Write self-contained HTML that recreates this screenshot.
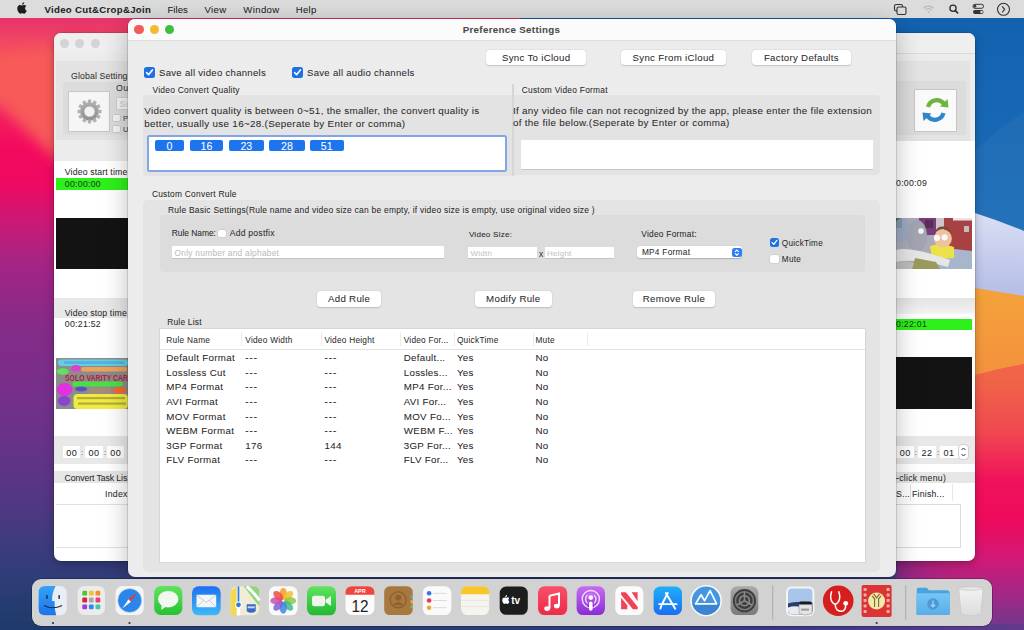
<!DOCTYPE html>
<html><head><meta charset="utf-8">
<style>
*{box-sizing:border-box;margin:0;padding:0}
html,body{width:1024px;height:630px;overflow:hidden;background:#2a2f6a;font-family:"Liberation Sans",sans-serif;color:#2b2b2b;position:relative}
.a{position:absolute}
.t{position:absolute;white-space:nowrap;line-height:1;-webkit-text-stroke:0.05px currentColor}
</style></head><body>

<svg class="a" style="left:0;top:0" width="1024" height="630" viewBox="0 0 1024 630">
<defs>
<linearGradient id="wlg" x1="0" y1="0" x2="0" y2="630" gradientUnits="userSpaceOnUse">
<stop offset="0.0286" stop-color="#e8336a"/>
<stop offset="0.0635" stop-color="#ef4466"/>
<stop offset="0.2381" stop-color="#f30a5e"/>
<stop offset="0.2937" stop-color="#ee0a62"/>
<stop offset="0.3571" stop-color="#c81a78"/>
<stop offset="0.4159" stop-color="#a52484"/>
<stop offset="0.5079" stop-color="#882a88"/>
<stop offset="0.6349" stop-color="#74308a"/>
<stop offset="0.7619" stop-color="#5a3585"/>
<stop offset="0.8413" stop-color="#443a80"/>
<stop offset="0.9206" stop-color="#2e3d78"/>
<stop offset="1.0000" stop-color="#1d3b6a"/>
</linearGradient>
<linearGradient id="wrg" x1="0" y1="0" x2="0" y2="630" gradientUnits="userSpaceOnUse">
<stop offset="0.4603" stop-color="#f06448"/>
<stop offset="0.6032" stop-color="#f06448"/>
<stop offset="0.6825" stop-color="#f04a50"/>
<stop offset="0.7619" stop-color="#f0125c"/>
<stop offset="0.8254" stop-color="#ee0a5c"/>
<stop offset="0.8889" stop-color="#d01a78"/>
<stop offset="0.9524" stop-color="#9a2a88"/>
<stop offset="1.0000" stop-color="#6c3a8c"/>
</linearGradient>
<linearGradient id="wor" x1="0" y1="280" x2="0" y2="380" gradientUnits="userSpaceOnUse"><stop offset="0" stop-color="#f4a43a"/><stop offset="1" stop-color="#f4903e"/></linearGradient>
<linearGradient id="wlt" x1="0" y1="205" x2="0" y2="300" gradientUnits="userSpaceOnUse"><stop offset="0" stop-color="#dfe3f6"/><stop offset="0.6" stop-color="#c3caec"/><stop offset="1" stop-color="#b3bce6"/></linearGradient>
<linearGradient id="wbl" x1="0" y1="18" x2="0" y2="230" gradientUnits="userSpaceOnUse"><stop offset="0" stop-color="#1262b0"/><stop offset="1" stop-color="#1c6db8"/></linearGradient>
<linearGradient id="wbg" x1="0" y1="0" x2="1024" y2="0" gradientUnits="userSpaceOnUse">
<stop offset="0" stop-color="#1e3a6c"/>
<stop offset="0.5" stop-color="#2a3c78"/>
<stop offset="0.78" stop-color="#3a3a82"/>
<stop offset="0.88" stop-color="#4a3a88"/>
<stop offset="1" stop-color="#643a8c"/>
</linearGradient>
<linearGradient id="wbg2" x1="520" y1="0" x2="1024" y2="0" gradientUnits="userSpaceOnUse"><stop offset="0" stop-color="#2a3c78"/><stop offset="0.74" stop-color="#383a80"/><stop offset="0.755" stop-color="#7a2a84" stop-opacity="0.75"/><stop offset="0.93" stop-color="#c81e78" stop-opacity="0"/></linearGradient>
<filter id="blur8" x="-50%" y="-50%" width="200%" height="200%"><feGaussianBlur stdDeviation="7"/></filter>
</defs>
<rect x="0" y="0" width="520" height="630" fill="url(#wlg)"/>
<polygon points="-30,50 150,38 150,196 54,157 0,106 -30,92" fill="#f75a58" filter="url(#blur8)"/>
<rect x="520" y="0" width="504" height="630" fill="url(#wrg)"/>
<path d="M520 200 H1024 V364 Q1000 368 975 375 L520 420Z" fill="url(#wor)"/>
<polygon points="520,0 1024,0 1024,296 975,288 520,220" fill="url(#wlt)"/>
<path d="M520 0 H1024 V231 Q1000 221 975 213 L520 45Z" fill="url(#wbl)"/>
<path d="M520 400 L975 150 Q1000 128 1024 112 V231 Q1000 221 975 213 L520 45Z" fill="#ffffff" opacity="0.04"/>
<rect x="520" y="540" width="504" height="90" fill="url(#wbg2)"/>
<rect x="0" y="624" width="1024" height="6" fill="url(#wbg)"/>
</svg>
<div class="a" style="left:0px;top:0px;width:1024.00px;height:18.00px;background:#dcdcdd"></div>
<svg class="a" style="left:16.8px;top:2px" width="10" height="11.8" viewBox="0 0 11 13"><path d="M8.9 6.9c0-1.6 1.3-2.3 1.4-2.4-.8-1.1-1.9-1.3-2.3-1.3-1-.1-1.9.6-2.4.6-.5 0-1.3-.6-2.1-.6C2.4 3.2 1.4 3.8.9 4.8c-1.2 2-.3 5 .8 6.6.6.8 1.2 1.6 2 1.6.8 0 1.1-.5 2.1-.5s1.2.5 2.1.5c.9 0 1.4-.8 1.9-1.6.6-.9.9-1.8.9-1.8s-1.8-.7-1.8-2.7zM7.3 2.2c.4-.5.7-1.3.7-2-.6 0-1.4.4-1.8.9-.4.5-.7 1.2-.6 1.9.7.1 1.3-.3 1.7-.8z" fill="#1d1d1d"/></svg>
<div class="t" style="left:44.40px;top:5.00px;font-size:9.59px;letter-spacing:0.336px;color:#1e1e1e;font-weight:bold;">Video Cut&amp;Crop&amp;Join</div>
<div class="t" style="left:167.40px;top:5.00px;font-size:9.59px;letter-spacing:0.053px;color:#222;font-weight:normal;">Files</div>
<div class="t" style="left:204.50px;top:5.00px;font-size:9.59px;letter-spacing:0.352px;color:#222;font-weight:normal;">View</div>
<div class="t" style="left:243.30px;top:5.00px;font-size:9.59px;letter-spacing:0.370px;color:#222;font-weight:normal;">Window</div>
<div class="t" style="left:295.80px;top:5.00px;font-size:9.59px;letter-spacing:0.274px;color:#222;font-weight:normal;">Help</div>
<svg class="a" style="left:890px;top:0px" width="134" height="18" viewBox="0 0 134 18">
<rect x="4.5" y="4.5" width="8" height="6.5" rx="1.5" fill="none" stroke="#333" stroke-width="1.1"/>
<rect x="7" y="7" width="9" height="7.5" rx="1.5" fill="#dcdcdd" stroke="#333" stroke-width="1.1"/>
<path d="M33.5 8.2 a7 7 0 0 1 10 0 M35.3 10 a4.5 4.5 0 0 1 6.4 0" fill="none" stroke="#b9b9b9" stroke-width="1.3"/>
<circle cx="38.5" cy="12" r="1" fill="#b9b9b9"/>
<circle cx="63" cy="8.3" r="3.1" fill="none" stroke="#2a2a2a" stroke-width="1.3"/>
<path d="M65.3 10.6 L67.6 12.9" stroke="#2a2a2a" stroke-width="1.5" stroke-linecap="round"/>
<rect x="83" y="4.3" width="10.5" height="4" rx="2" fill="none" stroke="#333" stroke-width="1"/>
<circle cx="85" cy="6.3" r="1.3" fill="#333"/>
<rect x="83" y="10" width="10.5" height="4" rx="2" fill="#333"/>
<circle cx="91.5" cy="12" r="1.3" fill="#dcdcdd"/>
<circle cx="113.5" cy="9.3" r="6" fill="none" stroke="#333" stroke-width="1.1"/>
<path d="M112.2 6.3 L114.6 9.3 L112.2 12.3" fill="none" stroke="#333" stroke-width="1.1"/>
</svg>
<div class="a" style="left:54px;top:33px;width:100px;height:528px;border-radius:7px;overflow:hidden;background:#fff;box-shadow:0 0 0 0.5px rgba(0,0,0,0.2),0 3px 10px rgba(0,0,0,0.25)">
<div class="a" style="left:0;top:0;width:100px;height:21px;background:#efefef;border-bottom:1px solid #dadada"></div>
<div class="a" style="left:6.0px;top:6px;width:9px;height:9px;border-radius:50%;background:#d4d4d4"></div>
<div class="a" style="left:21.0px;top:6px;width:9px;height:9px;border-radius:50%;background:#d4d4d4"></div>
<div class="a" style="left:36.5px;top:6px;width:9px;height:9px;border-radius:50%;background:#d4d4d4"></div>
<div class="a" style="left:0;top:20px;width:100px;height:108px;background:#ececec"></div>
<div class="a" style="left:2px;top:28px;width:98px;height:79px;background:#e3e3e3"></div>
<div class="a" style="left:9px;top:49px;width:91px;height:53px;background:#dcdcdc;border-radius:3px"></div>
</div>
<div class="t" style="left:71.00px;top:72.00px;font-size:8.74px;letter-spacing:0.123px;color:#333;font-weight:normal;">Global Setting</div>
<div class="t" style="left:116.00px;top:84.00px;font-size:8.74px;letter-spacing:0.375px;color:#333;font-weight:normal;">Ou</div>
<div class="a" style="left:68.5px;top:91.5px;width:40.50px;height:39.00px;background:#f6f6f6;box-shadow:0 0 0 0.5px rgba(0,0,0,0.2)"></div>
<svg class="a" style="left:76.5px;top:98.5px" width="25" height="25" viewBox="-12.5 -12.5 25 25">
<defs><linearGradient id="ggear" x1="0" y1="-12" x2="0" y2="12" gradientUnits="userSpaceOnUse"><stop offset="0" stop-color="#b4b4b4"/><stop offset="1" stop-color="#858585"/></linearGradient></defs>
<g fill="url(#ggear)">
<circle r="9.3"/>
<rect x="-1.7" y="-12" width="3.4" height="4" rx="0.6" transform="rotate(0)"/><rect x="-1.7" y="-12" width="3.4" height="4" rx="0.6" transform="rotate(30)"/><rect x="-1.7" y="-12" width="3.4" height="4" rx="0.6" transform="rotate(60)"/><rect x="-1.7" y="-12" width="3.4" height="4" rx="0.6" transform="rotate(90)"/><rect x="-1.7" y="-12" width="3.4" height="4" rx="0.6" transform="rotate(120)"/><rect x="-1.7" y="-12" width="3.4" height="4" rx="0.6" transform="rotate(150)"/><rect x="-1.7" y="-12" width="3.4" height="4" rx="0.6" transform="rotate(180)"/><rect x="-1.7" y="-12" width="3.4" height="4" rx="0.6" transform="rotate(210)"/><rect x="-1.7" y="-12" width="3.4" height="4" rx="0.6" transform="rotate(240)"/><rect x="-1.7" y="-12" width="3.4" height="4" rx="0.6" transform="rotate(270)"/><rect x="-1.7" y="-12" width="3.4" height="4" rx="0.6" transform="rotate(300)"/><rect x="-1.7" y="-12" width="3.4" height="4" rx="0.6" transform="rotate(330)"/>
</g><circle r="5.6" fill="#f2f2f2"/><circle r="5.6" fill="none" stroke="#9a9a9a" stroke-width="0.8"/>
</svg>
<div class="a" style="left:117px;top:97.5px;width:11.00px;height:11.00px;background:#f4f4f4;box-shadow:0 0 0 0.5px rgba(0,0,0,0.1)"></div>
<div class="t" style="left:119.50px;top:100.00px;font-size:8.46px;letter-spacing:0.336px;color:#c8c8c8;font-weight:normal;">Su</div>
<div class="a" style="left:113.4px;top:115px;width:6.60px;height:6.40px;background:#f4f4f4;box-shadow:0 0 0 0.5px rgba(0,0,0,0.15);border-radius:1px"></div>
<div class="a" style="left:113.4px;top:126px;width:6.60px;height:6.40px;background:#f4f4f4;box-shadow:0 0 0 0.5px rgba(0,0,0,0.15);border-radius:1px"></div>
<div class="t" style="left:123.00px;top:115.00px;font-size:7.52px;letter-spacing:0.328px;color:#444;font-weight:normal;">P</div>
<div class="t" style="left:123.00px;top:126.00px;font-size:7.52px;letter-spacing:0.344px;color:#444;font-weight:normal;">U</div>
<div class="t" style="left:64.80px;top:168.00px;font-size:8.74px;letter-spacing:0.129px;color:#2a2a2a;font-weight:normal;">Video start time</div>
<div class="a" style="left:56px;top:178px;width:72.00px;height:12.00px;background:#2ef01b"></div>
<div class="t" style="left:64.80px;top:180.00px;font-size:8.74px;letter-spacing:0.275px;color:#1b3b1b;font-weight:normal;">00:00:00</div>
<div class="a" style="left:56px;top:217.5px;width:72.00px;height:51.50px;background:#131313"></div>
<div class="a" style="left:54px;top:298px;width:74.00px;height:20.00px;background:#e8e8e8"></div>
<div class="t" style="left:64.80px;top:309.00px;font-size:8.74px;letter-spacing:0.137px;color:#2a2a2a;font-weight:normal;">Video stop time</div>
<div class="t" style="left:64.80px;top:320.00px;font-size:8.74px;letter-spacing:0.275px;color:#2a2a2a;font-weight:normal;">00:21:52</div>
<svg class="a" style="left:56px;top:357.5px" width="72" height="51" viewBox="0 0 72 51">
<rect width="72" height="51" fill="#8c8c8c"/>
<rect x="2" y="1.5" width="70" height="6.5" rx="3" fill="#62cfe6"/>
<rect x="8" y="3.3" width="60" height="2.6" fill="#3a78c8" opacity="0.35"/>
<rect x="25" y="9" width="46" height="4.5" rx="2" fill="#eea25a"/>
<ellipse cx="20" cy="10.3" rx="4.6" ry="3.2" fill="#e040c8"/>
<ellipse cx="6.7" cy="13.5" rx="6" ry="3.2" fill="#62e05e"/>
<text x="9" y="23.2" font-size="8.6" font-weight="bold" fill="#b41c40" font-family="Liberation Sans" textLength="63" lengthAdjust="spacingAndGlyphs">SOLO VARITY CAR</text>
<rect x="16.4" y="23.4" width="50.6" height="5" rx="2.5" fill="#48e044"/>
<ellipse cx="8.6" cy="31.5" rx="7.8" ry="6.4" fill="#e032de"/>
<ellipse cx="25.1" cy="31" rx="6" ry="2.5" fill="#5a50c0"/>
<rect x="33" y="29.5" width="22" height="7" fill="#b88a6a" opacity="0.6"/>
<ellipse cx="63.8" cy="32.4" rx="7" ry="3.7" fill="#ee6a34"/>
<ellipse cx="8.1" cy="43" rx="6.4" ry="5" fill="#8a44d0"/>
<rect x="17.5" y="36" width="54.5" height="15" rx="4" fill="#eeec44"/>
<rect x="21" y="39" width="48" height="2.2" fill="#8a7a2a" opacity="0.55"/>
<rect x="22" y="44.5" width="48" height="2.2" fill="#8a7a2a" opacity="0.55"/>
</svg>
<div class="a" style="left:54px;top:436px;width:74.00px;height:28.00px;background:#e8e8e8"></div>
<div class="a" style="left:63px;top:446px;width:17.00px;height:12.00px;background:#fff"></div>
<div class="t" style="left:63.00px;width:17.00px;text-align:center;top:449.00px;font-size:9.02px;letter-spacing:0.320px;text-indent:0.320px;color:#222;font-weight:normal">00</div>
<div class="a" style="left:84.5px;top:446px;width:18.50px;height:12.00px;background:#fff"></div>
<div class="t" style="left:84.50px;width:18.50px;text-align:center;top:449.00px;font-size:9.02px;letter-spacing:0.320px;text-indent:0.320px;color:#222;font-weight:normal">00</div>
<div class="a" style="left:107px;top:446px;width:17.00px;height:12.00px;background:#fff"></div>
<div class="t" style="left:107.00px;width:17.00px;text-align:center;top:449.00px;font-size:9.02px;letter-spacing:0.320px;text-indent:0.320px;color:#222;font-weight:normal">00</div>
<div class="t" style="left:81.00px;top:449.00px;font-size:7.52px;letter-spacing:0.141px;color:#444;font-weight:normal;">:</div>
<div class="t" style="left:104.00px;top:449.00px;font-size:7.52px;letter-spacing:0.141px;color:#444;font-weight:normal;">:</div>
<div class="a" style="left:54px;top:471px;width:74.00px;height:12.00px;background:#e6e6e6"></div>
<div class="t" style="left:64.50px;top:474.00px;font-size:8.74px;letter-spacing:-0.107px;color:#2a2a2a;font-weight:normal;">Convert Task Lis</div>
<div class="t" style="left:105.00px;top:490.00px;font-size:8.74px;letter-spacing:0.275px;color:#2a2a2a;font-weight:normal;">Index</div>
<div class="a" style="left:56px;top:504px;width:72.00px;height:1.00px;background:#e2e2e2"></div>
<div class="a" style="left:56px;top:547px;width:72.00px;height:1.00px;background:#e2e2e2"></div>
<div class="a" style="left:870px;top:33px;width:105px;height:528px;border-radius:7px;overflow:hidden;background:#fff;box-shadow:0 0 0 0.5px rgba(0,0,0,0.2),0 3px 10px rgba(0,0,0,0.25)">
<div class="a" style="left:0;top:0;width:105px;height:21px;background:#efefef;border-bottom:1px solid #dadada"></div>
<div class="a" style="left:0;top:21px;width:105px;height:87px;background:#ececec"></div>
<div class="a" style="left:0;top:28px;width:100px;height:80px;background:#e3e3e3"></div>
<div class="a" style="left:0;top:48px;width:96px;height:54px;background:#dcdcdc;border-radius:3px"></div>
</div>
<div class="a" style="left:915px;top:90px;width:41.00px;height:40.50px;background:#fafafa;box-shadow:0 0 0 0.5px rgba(0,0,0,0.2)"></div>
<svg class="a" style="left:919px;top:95px" width="33" height="30" viewBox="0 0 33 30">
<path d="M9 12 A9 9 0 0 1 25 9" fill="none" stroke="#6cb53f" stroke-width="4.2"/>
<path d="M21 11.5 L29.5 12.5 L28.5 4 Z" fill="#6cb53f"/>
<path d="M24.5 18 A9 9 0 0 1 8.5 21" fill="none" stroke="#2d87c8" stroke-width="4.2"/>
<path d="M12.5 18.5 L3.5 17.5 L4.5 26 Z" fill="#2d87c8"/>
</svg>
<div class="t" style="left:896.00px;top:179.00px;font-size:8.74px;letter-spacing:0.268px;color:#2a2a2a;font-weight:normal;">0:00:09</div>
<svg class="a" style="left:896px;top:217.7px" width="76.2" height="51" viewBox="0 0 76.2 51">
<rect width="76.2" height="51" fill="#a9acb8"/>
<rect x="0" y="0" width="6" height="10" fill="#4a7a62"/>
<rect x="23" y="0" width="17" height="17" fill="#7a3a7c"/>
<rect x="29" y="2" width="8" height="8" fill="#3a2a3a" opacity="0.6"/>
<rect x="40" y="0" width="8" height="12" fill="#cfc6cc"/>
<rect x="48" y="0" width="28.2" height="36" fill="#a84242"/>
<rect x="57" y="0" width="19" height="2.5" fill="#ece4e4"/>
<rect x="68" y="8" width="5" height="6" fill="#cbbaba"/>
<ellipse cx="21" cy="18" rx="10" ry="16" fill="#a2a4b0"/>
<ellipse cx="6" cy="12" rx="8" ry="12" fill="#98a8c4" opacity="0.7"/>
<circle cx="25" cy="13" r="2.8" fill="#f4f4f4"/>
<path d="M49.7 30 L76.2 33 V51 H42 Z" fill="#a8b6cc"/>
<path d="M34 28 Q46 24 58 29 L58 40 L36 41 Z" fill="#eee048"/>
<circle cx="46.9" cy="20.5" r="9" fill="#eec29c"/>
<path d="M37.5 17 Q40 8 47 8.5 Q54 8.5 56 16 Q52 11 47 11 Q41 11 37.5 17Z" fill="#7a4a32"/>
<circle cx="41" cy="19.8" r="3.1" fill="#f8f8f8"/>
<circle cx="48.5" cy="19.3" r="3.1" fill="#f8f8f8"/>
<path d="M0 32 Q14 28 54 42 L52 49 Q20 40 0 44 Z" fill="#e6e6e6"/>
<path d="M16 51 L19 40 L40 44 L44 51Z" fill="#9a9a5c"/>
<path d="M0 44 Q10 42 18 45 L16 51 H0Z" fill="#bdbdbd"/>
</svg>
<div class="a" style="left:896px;top:297.5px;width:79.00px;height:16.50px;background:linear-gradient(#e4e4e4,#eeeeee 70%,#f4f4f4)"></div>
<div class="a" style="left:896px;top:318.5px;width:76.00px;height:11.50px;background:#2ef01b"></div>
<div class="t" style="left:896.00px;top:320.00px;font-size:8.74px;letter-spacing:0.268px;color:#1b3b1b;font-weight:normal;">0:22:01</div>
<div class="a" style="left:896px;top:357px;width:76.00px;height:51.50px;background:#131313"></div>
<div class="a" style="left:896px;top:436px;width:79.00px;height:28.00px;background:#e8e8e8"></div>
<div class="a" style="left:896px;top:445.5px;width:18.00px;height:12.50px;background:#fff"></div>
<div class="t" style="left:896.00px;width:18.00px;text-align:center;top:449.00px;font-size:9.02px;letter-spacing:0.320px;text-indent:0.320px;color:#222;font-weight:normal">00</div>
<div class="a" style="left:917.5px;top:445.5px;width:18.50px;height:12.50px;background:#fff"></div>
<div class="t" style="left:917.50px;width:18.50px;text-align:center;top:449.00px;font-size:9.02px;letter-spacing:0.320px;text-indent:0.320px;color:#222;font-weight:normal">22</div>
<div class="a" style="left:940px;top:445.5px;width:17.50px;height:12.50px;background:#fff"></div>
<div class="t" style="left:940.00px;width:17.50px;text-align:center;top:449.00px;font-size:9.02px;letter-spacing:0.320px;text-indent:0.320px;color:#222;font-weight:normal">01</div>
<div class="t" style="left:914.50px;top:449.00px;font-size:7.52px;letter-spacing:0.141px;color:#444;font-weight:normal;">:</div>
<div class="t" style="left:937.00px;top:449.00px;font-size:7.52px;letter-spacing:0.141px;color:#444;font-weight:normal;">:</div>
<div class="a" style="left:959px;top:445px;width:8.50px;height:14.00px;background:#fff;border-radius:3px;box-shadow:0 0 0 0.5px rgba(0,0,0,0.2)"></div>
<svg class="a" style="left:959px;top:445px" width="9" height="14" viewBox="0 0 9 14"><path d="M2.5 5 L4.5 3 L6.5 5 M2.5 9 L4.5 11 L6.5 9" fill="none" stroke="#333" stroke-width="1"/></svg>
<div class="a" style="left:896px;top:471.5px;width:79.00px;height:11.50px;background:#e6e6e6"></div>
<div class="t" style="left:896.00px;top:474.00px;font-size:8.74px;letter-spacing:0.253px;color:#2a2a2a;font-weight:normal;">-click menu)</div>
<div class="t" style="left:896.00px;top:490.00px;font-size:8.74px;letter-spacing:0.211px;color:#2a2a2a;font-weight:normal;">S...</div>
<div class="a" style="left:909.5px;top:484px;width:1.00px;height:17.00px;background:#e0e0e0"></div>
<div class="t" style="left:912.00px;top:490.00px;font-size:8.74px;letter-spacing:0.219px;color:#2a2a2a;font-weight:normal;">Finish...</div>
<div class="a" style="left:952px;top:484px;width:1.00px;height:17.00px;background:#e8e8e8"></div>
<div class="a" style="left:896px;top:504px;width:65.00px;height:44.00px;background:#fff;border:1px solid #dcdcdc;border-left:none"></div>
<div class="a" style="left:128px;top:19px;width:768px;height:558px;border-radius:7px;overflow:hidden;background:#ececec;box-shadow:0 0 0 0.5px rgba(0,0,0,0.25),0 6px 26px rgba(0,0,0,0.26)">
<div class="a" style="left:0;top:0;width:768px;height:22px;background:#fbfbfb;border-bottom:1px solid #dedede"></div>
</div>
<div class="a" style="left:134.0px;top:24.9px;width:9.6px;height:9.6px;border-radius:50%;background:#f25b56"></div>
<div class="a" style="left:149.5px;top:24.9px;width:9.6px;height:9.6px;border-radius:50%;background:#f5b82e"></div>
<div class="a" style="left:164.7px;top:24.9px;width:9.6px;height:9.6px;border-radius:50%;background:#3fbf3f"></div>
<div class="t" style="left:462.70px;top:25.00px;font-size:9.78px;letter-spacing:0.309px;color:#4a4a4a;font-weight:bold;">Preference Settings</div>
<div class="a" style="left:143.5px;top:67px;width:11.0px;height:11px;border-radius:2.5px;background:#1f70e4"><svg width="100%" height="100%" viewBox="0 0 11 11" style="position:absolute;left:0;top:0"><path d="M2.6 5.6 L4.6 7.7 L8.4 2.9" fill="none" stroke="#fff" stroke-width="1.6" stroke-linecap="round" stroke-linejoin="round"/></svg></div>
<div class="t" style="left:159.00px;top:68.00px;font-size:9.59px;letter-spacing:0.279px;color:#2a2a2a;font-weight:normal;">Save all video channels</div>
<div class="a" style="left:292px;top:67px;width:11px;height:11px;border-radius:2.5px;background:#1f70e4"><svg width="100%" height="100%" viewBox="0 0 11 11" style="position:absolute;left:0;top:0"><path d="M2.6 5.6 L4.6 7.7 L8.4 2.9" fill="none" stroke="#fff" stroke-width="1.6" stroke-linecap="round" stroke-linejoin="round"/></svg></div>
<div class="t" style="left:307.00px;top:68.00px;font-size:9.59px;letter-spacing:0.280px;color:#2a2a2a;font-weight:normal;">Save all audio channels</div>
<div class="a" style="left:486px;top:50px;width:100.00px;height:15.20px;background:#fff;border-radius:3.5px;box-shadow:0 0.6px 1.4px rgba(0,0,0,0.17),0 0 0 0.3px rgba(0,0,0,0.04)"></div>
<div class="t" style="left:486.00px;width:100.00px;text-align:center;top:53.00px;font-size:9.68px;letter-spacing:0.297px;text-indent:0.297px;color:#2a2a2a;font-weight:normal">Sync To iCloud</div>
<div class="a" style="left:620.5px;top:50px;width:105.50px;height:15.20px;background:#fff;border-radius:3.5px;box-shadow:0 0.6px 1.4px rgba(0,0,0,0.17),0 0 0 0.3px rgba(0,0,0,0.04)"></div>
<div class="t" style="left:620.50px;width:105.50px;text-align:center;top:53.00px;font-size:9.68px;letter-spacing:0.310px;text-indent:0.310px;color:#2a2a2a;font-weight:normal">Sync From iCloud</div>
<div class="a" style="left:751.5px;top:50px;width:99.50px;height:15.20px;background:#fff;border-radius:3.5px;box-shadow:0 0.6px 1.4px rgba(0,0,0,0.17),0 0 0 0.3px rgba(0,0,0,0.04)"></div>
<div class="t" style="left:751.50px;width:99.50px;text-align:center;top:53.00px;font-size:9.68px;letter-spacing:0.284px;text-indent:0.284px;color:#2a2a2a;font-weight:normal">Factory Defaults</div>
<div class="t" style="left:152.40px;top:86.00px;font-size:8.46px;letter-spacing:0.253px;color:#2a2a2a;font-weight:normal;">Video Convert Quality</div>
<div class="t" style="left:521.70px;top:86.00px;font-size:8.37px;letter-spacing:0.263px;color:#2a2a2a;font-weight:normal;">Custom Video Format</div>
<div class="a" style="left:143px;top:94.8px;width:369.00px;height:81.20px;background:#e3e3e3;border-radius:4px 0 0 4px"></div>
<div class="a" style="left:512px;top:84px;width:1.50px;height:92.00px;background:#d6d6d6"></div>
<div class="t" style="left:144.25px;top:106.00px;font-size:9.87px;letter-spacing:0.276px;color:#2a2a2a;font-weight:normal;">Video convert quality is between 0~51, the smaller, the convert quality is</div>
<div class="t" style="left:144.25px;top:119.00px;font-size:9.87px;letter-spacing:0.295px;color:#2a2a2a;font-weight:normal;">better, usually use 16~28.(Seperate by Enter or comma)</div>
<div class="a" style="left:147.2px;top:135.2px;width:359.40px;height:36.60px;background:#fff;border:2.6px solid #80a6e6;border-radius:2.5px"></div>
<div class="a" style="left:154.6px;top:140px;width:29.70px;height:11.00px;background:#1c74ee;border-radius:2px"></div>
<div class="t" style="left:154.60px;width:29.70px;text-align:center;top:141.00px;font-size:10.6px;letter-spacing:0.000px;text-indent:0.000px;color:#fff;font-weight:normal">0</div>
<div class="a" style="left:189.6px;top:140px;width:33.70px;height:11.00px;background:#1c74ee;border-radius:2px"></div>
<div class="t" style="left:189.60px;width:33.70px;text-align:center;top:141.00px;font-size:10.6px;letter-spacing:0.000px;text-indent:0.000px;color:#fff;font-weight:normal">16</div>
<div class="a" style="left:228.6px;top:140px;width:35.40px;height:11.00px;background:#1c74ee;border-radius:2px"></div>
<div class="t" style="left:228.60px;width:35.40px;text-align:center;top:141.00px;font-size:10.6px;letter-spacing:0.000px;text-indent:0.000px;color:#fff;font-weight:normal">23</div>
<div class="a" style="left:269.3px;top:140px;width:35.30px;height:11.00px;background:#1c74ee;border-radius:2px"></div>
<div class="t" style="left:269.30px;width:35.30px;text-align:center;top:141.00px;font-size:10.6px;letter-spacing:0.000px;text-indent:0.000px;color:#fff;font-weight:normal">28</div>
<div class="a" style="left:309.9px;top:140px;width:33.70px;height:11.00px;background:#1c74ee;border-radius:2px"></div>
<div class="t" style="left:309.90px;width:33.70px;text-align:center;top:141.00px;font-size:10.6px;letter-spacing:0.000px;text-indent:0.000px;color:#fff;font-weight:normal">51</div>
<div class="a" style="left:513.5px;top:94.8px;width:366.50px;height:80.70px;background:#e3e3e3;border-radius:0 4px 4px 0"></div>
<div class="t" style="left:513.00px;top:106.00px;font-size:9.87px;letter-spacing:0.274px;color:#2a2a2a;font-weight:normal;">If any video file can not recognized by the app, please enter the file extension</div>
<div class="t" style="left:513.00px;top:118.00px;font-size:9.87px;letter-spacing:0.287px;color:#2a2a2a;font-weight:normal;">of the file below.(Seperate by Enter or comma)</div>
<div class="a" style="left:520.5px;top:140.4px;width:352.80px;height:28.60px;background:#fff;box-shadow:0 0.5px 0.5px rgba(0,0,0,0.12)"></div>
<div class="t" style="left:151.90px;top:190.00px;font-size:8.37px;letter-spacing:0.259px;color:#2a2a2a;font-weight:normal;">Custom Convert Rule</div>
<div class="a" style="left:143px;top:199.5px;width:737.00px;height:372.50px;background:#e4e4e4;border-radius:5px"></div>
<div class="t" style="left:168.00px;top:206.00px;font-size:8.46px;letter-spacing:0.240px;color:#2a2a2a;font-weight:normal;">Rule Basic Settings(Rule name and video size can be empty, if video size is empty, use original video size )</div>
<div class="a" style="left:159.6px;top:215.4px;width:705.40px;height:57.10px;background:#dcdcdc;border-radius:4px"></div>
<div class="t" style="left:171.70px;top:229.00px;font-size:8.46px;letter-spacing:-0.044px;color:#2a2a2a;font-weight:normal;">Rule Name:</div>
<div class="a" style="left:217.8px;top:230px;width:8.199999999999989px;height:7.199999999999989px;border-radius:2px;background:#fff;box-shadow:0 0 0 0.5px rgba(0,0,0,0.1)"></div>
<div class="t" style="left:229.80px;top:229.00px;font-size:8.55px;letter-spacing:0.246px;color:#2a2a2a;font-weight:normal;">Add postfix</div>
<div class="a" style="left:171.7px;top:246px;width:272.30px;height:12.30px;background:#fff;box-shadow:0 0.5px 0.5px rgba(0,0,0,0.1)"></div>
<div class="t" style="left:174.60px;top:249.00px;font-size:8.37px;letter-spacing:0.253px;color:#bdbdbd;font-weight:normal;">Only number and alphabet</div>
<div class="t" style="left:468.90px;top:231.00px;font-size:8.08px;letter-spacing:0.237px;color:#2a2a2a;font-weight:normal;">Video Size:</div>
<div class="a" style="left:468.3px;top:247px;width:68.70px;height:11.40px;background:#fff;box-shadow:0 0.5px 0.5px rgba(0,0,0,0.1)"></div>
<div class="t" style="left:470.50px;top:250.00px;font-size:7.99px;letter-spacing:0.263px;color:#c4c4c4;font-weight:normal;">Width</div>
<div class="t" style="left:539.00px;top:250.00px;font-size:8.46px;letter-spacing:0.266px;color:#333;font-weight:normal;">x</div>
<div class="a" style="left:544.6px;top:247px;width:69.90px;height:11.40px;background:#fff;box-shadow:0 0.5px 0.5px rgba(0,0,0,0.1)"></div>
<div class="t" style="left:547.00px;top:250.00px;font-size:7.99px;letter-spacing:0.247px;color:#c4c4c4;font-weight:normal;">Height</div>
<div class="t" style="left:641.30px;top:230.00px;font-size:8.37px;letter-spacing:0.248px;color:#2a2a2a;font-weight:normal;">Video Format:</div>
<div class="a" style="left:637.2px;top:246.1px;width:105.20px;height:11.70px;background:#fff;border-radius:3px;box-shadow:0 0.5px 1px rgba(0,0,0,0.2)"></div>
<div class="t" style="left:641.90px;top:249.00px;font-size:8.27px;letter-spacing:0.292px;color:#2a2a2a;font-weight:normal;">MP4 Format</div>
<div class="a" style="left:732.1px;top:248px;width:9.70px;height:9.20px;background:#2f7df6;border-radius:2.5px"></div>
<svg class="a" style="left:732.1px;top:248px" width="9.7" height="9.2" viewBox="0 0 9.7 9.2"><path d="M3 3.8 L4.85 2 L6.7 3.8 M3 5.4 L4.85 7.2 L6.7 5.4" fill="none" stroke="#fff" stroke-width="1.1"/></svg>
<div class="a" style="left:769.5px;top:238.3px;width:9.0px;height:9.0px;border-radius:2.5px;background:#1f70e4"><svg width="100%" height="100%" viewBox="0 0 11 11" style="position:absolute;left:0;top:0"><path d="M2.6 5.6 L4.6 7.7 L8.4 2.9" fill="none" stroke="#fff" stroke-width="1.6" stroke-linecap="round" stroke-linejoin="round"/></svg></div>
<div class="t" style="left:781.80px;top:240.00px;font-size:8.18px;letter-spacing:0.273px;color:#2a2a2a;font-weight:normal;">QuickTime</div>
<div class="a" style="left:769.5px;top:254.5px;width:9.0px;height:8.800000000000011px;border-radius:2px;background:#fff;box-shadow:0 0 0 0.5px rgba(0,0,0,0.1)"></div>
<div class="t" style="left:781.80px;top:256.00px;font-size:8.18px;letter-spacing:0.289px;color:#2a2a2a;font-weight:normal;">Mute</div>
<div class="a" style="left:317.2px;top:291.4px;width:63.50px;height:15.40px;background:#fff;border-radius:3.5px;box-shadow:0 0.6px 1.4px rgba(0,0,0,0.17),0 0 0 0.3px rgba(0,0,0,0.04)"></div>
<div class="t" style="left:317.20px;width:63.50px;text-align:center;top:294.00px;font-size:9.68px;letter-spacing:0.320px;text-indent:0.320px;color:#2a2a2a;font-weight:normal">Add Rule</div>
<div class="a" style="left:474.5px;top:291.4px;width:77.30px;height:15.40px;background:#fff;border-radius:3.5px;box-shadow:0 0.6px 1.4px rgba(0,0,0,0.17),0 0 0 0.3px rgba(0,0,0,0.04)"></div>
<div class="t" style="left:474.50px;width:77.30px;text-align:center;top:294.00px;font-size:9.68px;letter-spacing:0.300px;text-indent:0.300px;color:#2a2a2a;font-weight:normal">Modify Rule</div>
<div class="a" style="left:632.6px;top:291.4px;width:82.40px;height:15.40px;background:#fff;border-radius:3.5px;box-shadow:0 0.6px 1.4px rgba(0,0,0,0.17),0 0 0 0.3px rgba(0,0,0,0.04)"></div>
<div class="t" style="left:632.60px;width:82.40px;text-align:center;top:294.00px;font-size:9.68px;letter-spacing:0.345px;text-indent:0.345px;color:#2a2a2a;font-weight:normal">Remove Rule</div>
<div class="t" style="left:167.20px;top:318.00px;font-size:8.37px;letter-spacing:0.222px;color:#2a2a2a;font-weight:normal;">Rule List</div>
<div class="a" style="left:160px;top:328.7px;width:704.60px;height:233.30px;background:#fff;box-shadow:0 0 0 0.5px rgba(0,0,0,0.12)"></div>
<div class="a" style="left:160px;top:348.8px;width:704.60px;height:0.80px;background:#e2e2e2"></div>
<div class="a" style="left:241.1px;top:332px;width:1.00px;height:14.00px;background:#ebebeb"></div>
<div class="a" style="left:320.75px;top:332px;width:1.00px;height:14.00px;background:#ebebeb"></div>
<div class="a" style="left:399.5px;top:332px;width:1.00px;height:14.00px;background:#ebebeb"></div>
<div class="a" style="left:454.2px;top:332px;width:1.00px;height:14.00px;background:#ebebeb"></div>
<div class="a" style="left:532.75px;top:332px;width:1.00px;height:14.00px;background:#ebebeb"></div>
<div class="a" style="left:586.9px;top:332px;width:1.00px;height:14.00px;background:#ebebeb"></div>
<div class="t" style="left:166.25px;top:337.00px;font-size:8.27px;letter-spacing:0.295px;color:#2e2e2e;font-weight:normal;">Rule Name</div>
<div class="t" style="left:245.30px;top:337.00px;font-size:8.27px;letter-spacing:0.260px;color:#2e2e2e;font-weight:normal;">Video Width</div>
<div class="t" style="left:324.40px;top:337.00px;font-size:8.27px;letter-spacing:0.253px;color:#2e2e2e;font-weight:normal;">Video Height</div>
<div class="t" style="left:403.75px;top:337.00px;font-size:8.27px;letter-spacing:0.225px;color:#2e2e2e;font-weight:normal;">Video For...</div>
<div class="t" style="left:456.90px;top:337.00px;font-size:8.27px;letter-spacing:0.280px;color:#2e2e2e;font-weight:normal;">QuickTime</div>
<div class="t" style="left:535.40px;top:337.00px;font-size:8.27px;letter-spacing:0.293px;color:#2e2e2e;font-weight:normal;">Mute</div>
<div class="t" style="left:166.25px;top:353.00px;font-size:9.78px;letter-spacing:0.295px;color:#262626;font-weight:normal;">Default Format</div>
<div class="t" style="left:245.30px;top:353.00px;font-size:9.78px;letter-spacing:1.008px;color:#262626;font-weight:normal;">---</div>
<div class="t" style="left:324.40px;top:353.00px;font-size:9.78px;letter-spacing:1.008px;color:#262626;font-weight:normal;">---</div>
<div class="t" style="left:403.75px;top:353.00px;font-size:9.78px;letter-spacing:0.250px;color:#262626;font-weight:normal;">Default...</div>
<div class="t" style="left:456.90px;top:353.00px;font-size:9.78px;letter-spacing:0.339px;color:#262626;font-weight:normal;">Yes</div>
<div class="t" style="left:535.40px;top:353.00px;font-size:9.78px;letter-spacing:0.406px;color:#262626;font-weight:normal;">No</div>
<div class="t" style="left:166.25px;top:368.00px;font-size:9.78px;letter-spacing:0.298px;color:#262626;font-weight:normal;">Lossless Cut</div>
<div class="t" style="left:245.30px;top:368.00px;font-size:9.78px;letter-spacing:1.008px;color:#262626;font-weight:normal;">---</div>
<div class="t" style="left:324.40px;top:368.00px;font-size:9.78px;letter-spacing:1.008px;color:#262626;font-weight:normal;">---</div>
<div class="t" style="left:403.75px;top:368.00px;font-size:9.78px;letter-spacing:0.264px;color:#262626;font-weight:normal;">Lossles...</div>
<div class="t" style="left:456.90px;top:368.00px;font-size:9.78px;letter-spacing:0.339px;color:#262626;font-weight:normal;">Yes</div>
<div class="t" style="left:535.40px;top:368.00px;font-size:9.78px;letter-spacing:0.406px;color:#262626;font-weight:normal;">No</div>
<div class="t" style="left:166.25px;top:382.00px;font-size:9.78px;letter-spacing:0.344px;color:#262626;font-weight:normal;">MP4 Format</div>
<div class="t" style="left:245.30px;top:382.00px;font-size:9.78px;letter-spacing:1.008px;color:#262626;font-weight:normal;">---</div>
<div class="t" style="left:324.40px;top:382.00px;font-size:9.78px;letter-spacing:1.008px;color:#262626;font-weight:normal;">---</div>
<div class="t" style="left:403.75px;top:382.00px;font-size:9.78px;letter-spacing:0.289px;color:#262626;font-weight:normal;">MP4 For...</div>
<div class="t" style="left:456.90px;top:382.00px;font-size:9.78px;letter-spacing:0.339px;color:#262626;font-weight:normal;">Yes</div>
<div class="t" style="left:535.40px;top:382.00px;font-size:9.78px;letter-spacing:0.406px;color:#262626;font-weight:normal;">No</div>
<div class="t" style="left:166.25px;top:397.00px;font-size:9.78px;letter-spacing:0.312px;color:#262626;font-weight:normal;">AVI Format</div>
<div class="t" style="left:245.30px;top:397.00px;font-size:9.78px;letter-spacing:1.008px;color:#262626;font-weight:normal;">---</div>
<div class="t" style="left:324.40px;top:397.00px;font-size:9.78px;letter-spacing:1.008px;color:#262626;font-weight:normal;">---</div>
<div class="t" style="left:403.75px;top:397.00px;font-size:9.78px;letter-spacing:0.256px;color:#262626;font-weight:normal;">AVI For...</div>
<div class="t" style="left:456.90px;top:397.00px;font-size:9.78px;letter-spacing:0.339px;color:#262626;font-weight:normal;">Yes</div>
<div class="t" style="left:535.40px;top:397.00px;font-size:9.78px;letter-spacing:0.406px;color:#262626;font-weight:normal;">No</div>
<div class="t" style="left:166.25px;top:412.00px;font-size:9.78px;letter-spacing:0.358px;color:#262626;font-weight:normal;">MOV Format</div>
<div class="t" style="left:245.30px;top:412.00px;font-size:9.78px;letter-spacing:1.008px;color:#262626;font-weight:normal;">---</div>
<div class="t" style="left:324.40px;top:412.00px;font-size:9.78px;letter-spacing:1.008px;color:#262626;font-weight:normal;">---</div>
<div class="t" style="left:403.75px;top:412.00px;font-size:9.78px;letter-spacing:0.316px;color:#262626;font-weight:normal;">MOV Fo...</div>
<div class="t" style="left:456.90px;top:412.00px;font-size:9.78px;letter-spacing:0.339px;color:#262626;font-weight:normal;">Yes</div>
<div class="t" style="left:535.40px;top:412.00px;font-size:9.78px;letter-spacing:0.406px;color:#262626;font-weight:normal;">No</div>
<div class="t" style="left:166.25px;top:426.00px;font-size:9.78px;letter-spacing:0.372px;color:#262626;font-weight:normal;">WEBM Format</div>
<div class="t" style="left:245.30px;top:426.00px;font-size:9.78px;letter-spacing:1.008px;color:#262626;font-weight:normal;">---</div>
<div class="t" style="left:324.40px;top:426.00px;font-size:9.78px;letter-spacing:1.008px;color:#262626;font-weight:normal;">---</div>
<div class="t" style="left:403.75px;top:426.00px;font-size:9.78px;letter-spacing:0.328px;color:#262626;font-weight:normal;">WEBM F...</div>
<div class="t" style="left:456.90px;top:426.00px;font-size:9.78px;letter-spacing:0.339px;color:#262626;font-weight:normal;">Yes</div>
<div class="t" style="left:535.40px;top:426.00px;font-size:9.78px;letter-spacing:0.406px;color:#262626;font-weight:normal;">No</div>
<div class="t" style="left:166.25px;top:441.00px;font-size:9.78px;letter-spacing:0.339px;color:#262626;font-weight:normal;">3GP Format</div>
<div class="t" style="left:245.30px;top:441.00px;font-size:9.78px;letter-spacing:0.349px;color:#262626;font-weight:normal;">176</div>
<div class="t" style="left:324.40px;top:441.00px;font-size:9.78px;letter-spacing:0.349px;color:#262626;font-weight:normal;">144</div>
<div class="t" style="left:403.75px;top:441.00px;font-size:9.78px;letter-spacing:0.284px;color:#262626;font-weight:normal;">3GP For...</div>
<div class="t" style="left:456.90px;top:441.00px;font-size:9.78px;letter-spacing:0.339px;color:#262626;font-weight:normal;">Yes</div>
<div class="t" style="left:535.40px;top:441.00px;font-size:9.78px;letter-spacing:0.406px;color:#262626;font-weight:normal;">No</div>
<div class="t" style="left:166.25px;top:455.00px;font-size:9.78px;letter-spacing:0.327px;color:#262626;font-weight:normal;">FLV Format</div>
<div class="t" style="left:245.30px;top:455.00px;font-size:9.78px;letter-spacing:1.008px;color:#262626;font-weight:normal;">---</div>
<div class="t" style="left:324.40px;top:455.00px;font-size:9.78px;letter-spacing:1.008px;color:#262626;font-weight:normal;">---</div>
<div class="t" style="left:403.75px;top:455.00px;font-size:9.78px;letter-spacing:0.270px;color:#262626;font-weight:normal;">FLV For...</div>
<div class="t" style="left:456.90px;top:455.00px;font-size:9.78px;letter-spacing:0.339px;color:#262626;font-weight:normal;">Yes</div>
<div class="t" style="left:535.40px;top:455.00px;font-size:9.78px;letter-spacing:0.406px;color:#262626;font-weight:normal;">No</div>
<div class="a" style="left:32px;top:579px;width:960px;height:47px;border-radius:9px;background:#d2d2d3;box-shadow:0 0 0 0.6px rgba(0,0,0,0.45)"></div>
<svg class="a" style="left:0;top:570px" width="1024" height="60" viewBox="0 570 1024 60">
<defs>
<linearGradient id="gfind" x1="0" y1="0" x2="0" y2="1"><stop offset="0" stop-color="#34a3f7"/><stop offset="1" stop-color="#1b74e9"/></linearGradient>
<linearGradient id="gmsg" x1="0" y1="0" x2="0" y2="1"><stop offset="0" stop-color="#5fe45f"/><stop offset="1" stop-color="#25c232"/></linearGradient>
<linearGradient id="gmail" x1="0" y1="0" x2="0" y2="1"><stop offset="0" stop-color="#1f6ff0"/><stop offset="1" stop-color="#3ebaf8"/></linearGradient>
<linearGradient id="gft" x1="0" y1="0" x2="0" y2="1"><stop offset="0" stop-color="#5fe45f"/><stop offset="1" stop-color="#22b830"/></linearGradient>
<linearGradient id="gmus" x1="0" y1="0" x2="0" y2="1"><stop offset="0" stop-color="#f8506a"/><stop offset="1" stop-color="#ee2a48"/></linearGradient>
<linearGradient id="gpod" x1="0" y1="0" x2="0" y2="1"><stop offset="0" stop-color="#c66ef0"/><stop offset="1" stop-color="#8a2bd6"/></linearGradient>
<linearGradient id="gapp" x1="0" y1="0" x2="0" y2="1"><stop offset="0" stop-color="#1eb0f8"/><stop offset="1" stop-color="#1c6ef0"/></linearGradient>
<linearGradient id="gsys" x1="0" y1="0" x2="0" y2="1"><stop offset="0" stop-color="#a9a9a9"/><stop offset="1" stop-color="#7a7a7a"/></linearGradient>
<linearGradient id="gfold" x1="0" y1="0" x2="0" y2="1"><stop offset="0" stop-color="#76c6f2"/><stop offset="1" stop-color="#5aaee8"/></linearGradient>
<linearGradient id="gtrash" x1="0" y1="0" x2="0" y2="1"><stop offset="0" stop-color="#f4f4f4"/><stop offset="1" stop-color="#dcdcdc"/></linearGradient>
</defs>
<!-- Finder -->
<g transform="translate(38.6,586)">
<rect width="28.2" height="29.2" rx="6.5" fill="#e9eef4"/>
<path d="M6.5 0 H17 Q13 8 13.5 15 H16 Q15.5 22 17.5 29.2 H6.5 Q0 29.2 0 22.7 V6.5 Q0 0 6.5 0Z" fill="url(#gfind)"/>
<rect x="7.6" y="9" width="1.5" height="4" rx="0.7" fill="#1a2a44"/>
<rect x="19.8" y="9" width="1.5" height="4" rx="0.7" fill="#1a2a44"/>
<path d="M5.5 19.5 Q14 24 23.5 19.5" fill="none" stroke="#1a2a44" stroke-width="1.2"/>
</g>
<!-- Launchpad -->
<g transform="translate(77.7,586)">
<rect width="27.2" height="29" rx="6.5" fill="#ececec"/>
<rect x="4.6" y="4.8" width="4.8" height="4.8" rx="1.2" fill="#45c63c"/><rect x="11.2" y="4.8" width="4.8" height="4.8" rx="1.2" fill="#f4c12c"/><rect x="17.8" y="4.8" width="4.8" height="4.8" rx="1.2" fill="#f0902a"/>
<rect x="4.6" y="11.6" width="4.8" height="4.8" rx="1.2" fill="#dc2236"/><rect x="11.2" y="11.6" width="4.8" height="4.8" rx="1.2" fill="#a8a8a8"/><rect x="17.8" y="11.6" width="4.8" height="4.8" rx="1.2" fill="#ec3a78"/>
<rect x="4.6" y="18.4" width="4.8" height="4.8" rx="1.2" fill="#a23ad8"/><rect x="11.2" y="18.4" width="4.8" height="4.8" rx="1.2" fill="#2a8af0"/><rect x="17.8" y="18.4" width="4.8" height="4.8" rx="1.2" fill="#3ec9a8"/>
</g>
<!-- Safari -->
<g transform="translate(115.6,586)">
<rect width="28.2" height="29" rx="6.5" fill="#f4f4f4"/>
<circle cx="14.1" cy="14.5" r="12" fill="#2b86ea"/>
<circle cx="14.1" cy="14.5" r="12" fill="none" stroke="#d8e4f0" stroke-width="0.6"/>
<path d="M21.5 6.5 L15.3 15.7 L12.9 13.3Z" fill="#e23a3a"/>
<path d="M6.7 22.5 L12.9 13.3 L15.3 15.7Z" fill="#fff"/>
</g>
<!-- Messages -->
<g transform="translate(154.2,586)">
<rect width="28.1" height="29" rx="6.5" fill="url(#gmsg)"/>
<ellipse cx="14" cy="13.2" rx="10.2" ry="8.3" fill="#f2f8f0"/>
<path d="M7.5 18.5 L7 24 L12 20.5Z" fill="#f2f8f0"/>
</g>
<!-- Mail -->
<g transform="translate(192,586.3)">
<rect width="28.7" height="29" rx="6.5" fill="url(#gmail)"/>
<rect x="4.5" y="8.5" width="19.7" height="12.5" rx="1" fill="#f4f6f8"/>
<path d="M4.8 9 L14.35 16 L23.9 9 M4.8 20.7 L11.5 14 M23.9 20.7 L17.2 14" fill="none" stroke="#b8c4d0" stroke-width="0.8"/>
</g>
<!-- Maps -->
<g transform="translate(230.7,586.3)">
<rect width="28.7" height="29" rx="6.5" fill="#f1ecd8"/>
<path d="M13 0 H22.2 Q28.7 0 28.7 6.5 V20 Q22 12 13 0Z" fill="#8fd67a"/>
<path d="M16 0 Q24 7 28.7 14" fill="none" stroke="#fff" stroke-width="3"/>
<path d="M0 5 Q4 2 6 0 V29 H0Z" fill="#f4d948"/>
<rect x="6.2" y="0" width="3.2" height="29" fill="#fff"/>
<rect x="6.9" y="0" width="1.8" height="17" fill="#2f7ae8"/>
<circle cx="7.8" cy="18.5" r="3.4" fill="#fff"/><circle cx="7.8" cy="18.5" r="2.4" fill="#2f7ae8"/>
<path d="M16 18 H25 V25 Q20.5 28 16 25Z" fill="#3a66c8"/>
<rect x="17" y="20" width="7" height="2" fill="#c8d8f8"/>
</g>
<!-- Photos -->
<g transform="translate(268.9,586.3)">
<rect width="28.7" height="29" rx="6.5" fill="#fafafa"/>
<g transform="translate(14.35,14.5)">
<ellipse cx="0" cy="-7" rx="3.6" ry="6" fill="#f6a32a" opacity="0.9"/>
<ellipse cx="0" cy="-7" rx="3.6" ry="6" fill="#f2c12e" opacity="0.85" transform="rotate(45)"/>
<ellipse cx="0" cy="-7" rx="3.6" ry="6" fill="#8acb44" opacity="0.85" transform="rotate(90)"/>
<ellipse cx="0" cy="-7" rx="3.6" ry="6" fill="#3fba8a" opacity="0.85" transform="rotate(135)"/>
<ellipse cx="0" cy="-7" rx="3.6" ry="6" fill="#3a8ae0" opacity="0.85" transform="rotate(180)"/>
<ellipse cx="0" cy="-7" rx="3.6" ry="6" fill="#7a62d8" opacity="0.85" transform="rotate(225)"/>
<ellipse cx="0" cy="-7" rx="3.6" ry="6" fill="#c850b0" opacity="0.85" transform="rotate(270)"/>
<ellipse cx="0" cy="-7" rx="3.6" ry="6" fill="#ee4a4a" opacity="0.85" transform="rotate(315)"/>
</g>
</g>
<!-- FaceTime -->
<g transform="translate(307,586.3)">
<rect width="29" height="29" rx="6.5" fill="url(#gft)"/>
<rect x="5" y="9.5" width="13" height="10.5" rx="2.2" fill="#f0f6ee"/>
<path d="M18.5 13.5 L24 9.8 V19.7 L18.5 16Z" fill="#f0f6ee"/>
</g>
<!-- Calendar -->
<g transform="translate(345.5,586.2)">
<rect width="28.9" height="28.8" rx="6.5" fill="#fbfbfb"/>
<path d="M6.5 0 H22.4 Q28.9 0 28.9 6.5 V8.6 H0 V6.5 Q0 0 6.5 0Z" fill="#f0453e"/>
<text x="14.45" y="7.3" font-size="5.5" font-weight="bold" fill="#fff" text-anchor="middle" font-family="Liberation Sans">APR</text>
<text x="14.45" y="25.4" font-size="16.5" fill="#222" text-anchor="middle" font-family="Liberation Sans" textLength="17" lengthAdjust="spacingAndGlyphs">12</text>
</g>
<!-- Contacts -->
<g transform="translate(384.2,586.3)">
<rect width="28.5" height="28.8" rx="5.5" fill="#a8793e"/>
<rect x="26.5" y="9" width="2" height="3" fill="#5fa8d8"/><rect x="26.5" y="14" width="2" height="3" fill="#f0b24a"/><rect x="26.5" y="19" width="2" height="3" fill="#7ac060"/>
<circle cx="14" cy="13.5" r="8" fill="none" stroke="#8e6230" stroke-width="1.4"/>
<circle cx="14" cy="11.5" r="3" fill="#8e6230"/>
<path d="M8.5 19 Q14 12.5 19.5 19" fill="#8e6230"/>
</g>
<!-- Reminders -->
<g transform="translate(422.8,586.3)">
<rect width="28.5" height="28.8" rx="6.5" fill="#fafafa"/>
<circle cx="6.3" cy="7" r="2.3" fill="#2f7ae8"/><circle cx="6.3" cy="14.2" r="2.3" fill="#e83a4a"/><circle cx="6.3" cy="21.4" r="2.3" fill="#f0a83a"/>
<rect x="10" y="6.6" width="14" height="0.8" fill="#d4d4d4"/><rect x="10" y="13.8" width="14" height="0.8" fill="#d4d4d4"/><rect x="10" y="21" width="14" height="0.8" fill="#d4d4d4"/>
</g>
<!-- Notes -->
<g transform="translate(461,586.3)">
<rect width="28.2" height="28.8" rx="6.5" fill="#f6f4ee"/>
<path d="M6.5 0 H21.7 Q28.2 0 28.2 6.5 V8 H0 V6.5 Q0 0 6.5 0Z" fill="#f6c62a"/>
<rect x="0" y="14" width="28.2" height="0.5" fill="#dcdcdc"/><rect x="0" y="20" width="28.2" height="0.5" fill="#dcdcdc"/>
</g>
<!-- TV -->
<g transform="translate(499.7,586.5)">
<rect width="28.1" height="28.3" rx="6.5" fill="#1c1e1e"/>
<path d="M8.3 10.8 c-.7 0-1.4.6-2 .6-.6 0-1.1-.5-1.8-.5-1 0-2 .8-2 2.6 0 1.8 1.1 3.9 2 3.9.6 0 .9-.4 1.7-.4.8 0 1 .4 1.7.4.8 0 1.5-1.3 1.8-2.1-1.2-.6-1.5-2.7-.2-3.5-.4-.6-.9-1-1.2-1z M6.8 10.3 c.4-.5.6-1.1.5-1.7-.5 0-1.1.4-1.4.8-.3.4-.5 1-.4 1.5.5.1 1-.2 1.3-.6z" fill="#fff"/>
<text x="11.5" y="17.5" font-size="10" font-weight="bold" fill="#fff" font-family="Liberation Sans">tv</text>
</g>
<!-- Music -->
<g transform="translate(538,586.3)">
<rect width="29.2" height="28.8" rx="6.5" fill="url(#gmus)"/>
<path d="M11.5 9.5 L21 7.3 V19.5" fill="none" stroke="#fff" stroke-width="2"/>
<path d="M11.5 9.5 V22" fill="none" stroke="#fff" stroke-width="2"/>
<ellipse cx="9.2" cy="22.3" rx="2.9" ry="2.3" fill="#fff"/>
<ellipse cx="18.7" cy="19.8" rx="2.9" ry="2.3" fill="#fff"/>
</g>
<!-- Podcasts -->
<g transform="translate(576.6,586.3)">
<rect width="28.4" height="28.8" rx="6.5" fill="url(#gpod)"/>
<circle cx="14.2" cy="12.8" r="8.6" fill="none" stroke="#f3dcff" stroke-width="1.4"/>
<circle cx="14.2" cy="12.8" r="5.2" fill="none" stroke="#f3dcff" stroke-width="1.4"/>
<rect x="11" y="7" width="6.4" height="14" fill="url(#gpod)"/>
<circle cx="14.2" cy="11.3" r="2.4" fill="#fff"/>
<rect x="12.4" y="15.2" width="3.6" height="9.3" rx="1.8" fill="#fff"/>
</g>
<!-- News -->
<g transform="translate(615.3,586.3)">
<rect width="28.1" height="28.8" rx="6.5" fill="#fbfbfb"/>
<path d="M5.8 6 H10.5 L22.3 20.5 V23 H17.6 L5.8 8.5Z" fill="#f0435a"/>
<path d="M5.8 11.5 L12 19 V23 H5.8Z" fill="#f0435a"/>
<path d="M16.3 6 H22.3 V15 Z" fill="#f0435a"/>
</g>
<!-- App Store -->
<g transform="translate(653.6,586.5)">
<rect width="28.4" height="28.5" rx="6.5" fill="url(#gapp)"/>
<path d="M14.2 6.5 L8.2 18 M7.6 19.6 L6.8 22 M12.2 6.5 L20.6 20.5 L21.6 22.2 M5.6 17.6 H23" fill="none" stroke="#fff" stroke-width="1.9" stroke-linecap="round"/>
</g>
<!-- Mountain circle -->
<g transform="translate(706.1,600.7)">
<circle r="15.8" fill="#f4f8fc"/>
<circle r="14.2" fill="#4596e0"/>
<path d="M-13.8 3.2 H13.8 A14.2 14.2 0 0 1 -13.8 3.2Z" fill="#3a84d2"/>
<path d="M-10.5 3.2 L-5 -6 L-1.5 0 L4 -10 L10.5 3.2 Z M-10.5 3.2 H10.5" fill="none" stroke="#fff" stroke-width="1.7" stroke-linejoin="round"/>
</g>
<!-- System Preferences -->
<g transform="translate(730.6,586.3)">
<rect width="27.7" height="28.8" rx="6.5" fill="url(#gsys)"/>
<circle cx="13.85" cy="14.4" r="11.6" fill="#3c3c3c"/>
<circle cx="13.85" cy="14.4" r="9" fill="none" stroke="#7a7a7a" stroke-width="1.6"/>
<circle cx="13.85" cy="14.4" r="5" fill="none" stroke="#8a8a8a" stroke-width="1.6"/>
<path d="M13.85 14.4 L13.85 5.4 M13.85 14.4 L6 19 M13.85 14.4 L21.7 19" stroke="#8a8a8a" stroke-width="1.6"/>
</g>
<rect x="772.3" y="585.5" width="0.9" height="34" fill="#a6a6a6"/>
<!-- Preview -->
<g transform="translate(786,586.6)">
<rect width="28.4" height="29.6" rx="5.5" fill="#f4f4f4"/>
<rect x="2" y="2" width="24.4" height="25.6" rx="4" fill="#a9c6ea"/>
<path d="M2 17 Q10 14 26.4 16 V23.6 Q26.4 27.6 22.4 27.6 H6 Q2 27.6 2 23.6Z" fill="#2a3e6a"/>
<path d="M2 21 Q10 18 20 22 V27.6 H6 Q2 27.6 2 23.6Z" fill="#e8ecf0"/>
<rect x="13.5" y="15" width="12" height="4" rx="1.5" fill="#1a1a1a"/>
<path d="M13 18 H26 L26 27 Q19.5 30 13 27Z" fill="#e4e4e4" stroke="#888" stroke-width="0.5"/>
<rect x="15" y="22" width="8" height="2" fill="#999"/>
</g>
<!-- Stethoscope -->
<g transform="translate(838.2,600.8)">
<circle r="15.3" fill="#d71e1e"/>
<path d="M-6.5 -9.5 Q-9 -2 -5.5 2 Q-3 4.5 -0.5 2 Q3 -2 0.5 -9.5" fill="none" stroke="#fff" stroke-width="1.5"/>
<path d="M-3 3.3 Q-3 10.5 3 10.5 Q7.5 10.5 7.5 4" fill="none" stroke="#fff" stroke-width="1.5"/>
<circle cx="7.5" cy="2.5" r="2.4" fill="#fff"/>
</g>
<!-- Film app -->
<g transform="translate(861.6,584.9)">
<rect width="30" height="32.1" rx="2" fill="#dc3434"/>
<g fill="#f4b0a8">
<rect x="2" y="3" width="3" height="3" rx="0.6"/><rect x="2" y="8.5" width="3" height="3" rx="0.6"/><rect x="2" y="14" width="3" height="3" rx="0.6"/><rect x="2" y="19.5" width="3" height="3" rx="0.6"/><rect x="2" y="25" width="3" height="3" rx="0.6"/>
<rect x="25" y="3" width="3" height="3" rx="0.6"/><rect x="25" y="8.5" width="3" height="3" rx="0.6"/><rect x="25" y="14" width="3" height="3" rx="0.6"/><rect x="25" y="19.5" width="3" height="3" rx="0.6"/><rect x="25" y="25" width="3" height="3" rx="0.6"/>
</g>
<circle cx="15" cy="16" r="8.5" fill="#f4eaa8"/>
<path d="M12 9 L15 13 L18 9 M13 13 V22 M17 13 V22 M10.5 11 L13 14 M19.5 11 L17 14" fill="none" stroke="#7a6a3a" stroke-width="1.1"/>
</g>
<rect x="905.3" y="585.5" width="0.9" height="34" fill="#a6a6a6"/>
<!-- Downloads folder -->
<g transform="translate(915.8,587.7)">
<path d="M1 1.5 Q1 0 2.5 0 H11 L13 2.5 H31.5 Q33.9 2.5 33.9 5 V25.8 Q33.9 27.3 32.4 27.3 H2.5 Q1 27.3 1 25.8Z" fill="#4aa2e0"/>
<rect x="0.5" y="5.5" width="33.4" height="21.8" rx="1.5" fill="url(#gfold)"/>
<circle cx="17.2" cy="16.3" r="5.8" fill="#4a9ad8"/>
<path d="M17.2 12.8 V19 M15 17 L17.2 19.2 L19.4 17" fill="none" stroke="#a8d8f6" stroke-width="1.2"/>
</g>
<!-- Trash -->
<g transform="translate(958.3,586.2)">
<path d="M0.5 2 Q12.65 -0.5 24.8 2 L22.5 28 Q12.65 31 2.8 28Z" fill="url(#gtrash)" stroke="#c4c4c4" stroke-width="0.6"/>
<ellipse cx="12.65" cy="2.3" rx="12.1" ry="1.8" fill="#e6e6e6" stroke="#bbb" stroke-width="0.5"/>
</g>
<!-- running dots -->
<circle cx="53" cy="623" r="1.1" fill="#333"/>
<circle cx="129.5" cy="623" r="1.1" fill="#333"/>
<circle cx="876.7" cy="623" r="1.1" fill="#333"/>
</svg>
</body></html>
